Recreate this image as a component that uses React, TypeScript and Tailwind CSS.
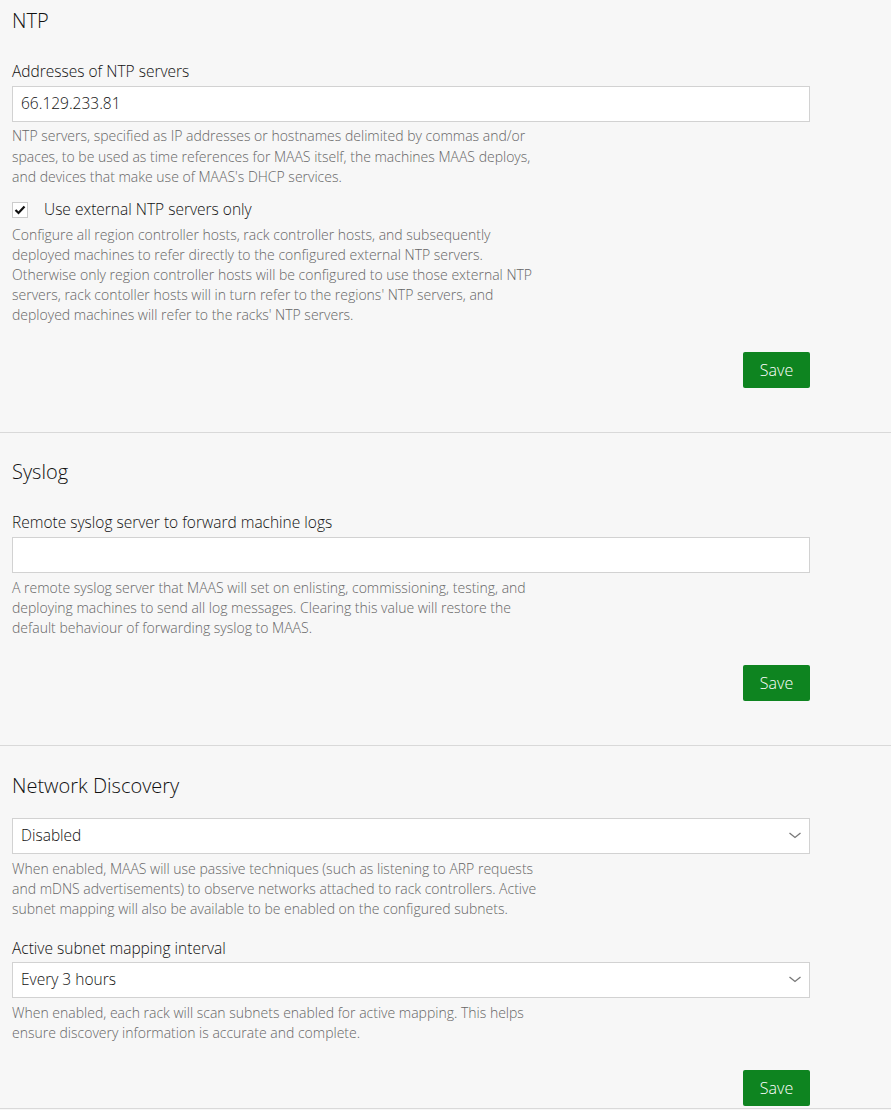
const font = { fontFamily: '"Open Sans", "Noto Sans", sans-serif' };

function SaveButton() {
  return (
    <div className="flex justify-end pr-[81px] mt-[27px]">
      <button className="h-9 w-[67px] rounded-[2px] bg-[#0e8420] text-[16px] font-light text-white">Save</button>
    </div>
  );
}

function Help({ lines, className = "" }: { lines: string[]; className?: string }) {
  return (
    <p className={`text-[14px] leading-5 text-[#666] ${className}`}>
      {lines.map((l) => (
        <span key={l} className="block">
          {l}
        </span>
      ))}
    </p>
  );
}

function Select({ value }: { value: string }) {
  return (
    <div className="mr-[81px] flex h-9 items-center justify-between border border-[#d2d2d2] bg-white pl-2 pr-2 text-[15.5px] text-[#111]">
      <span>{value}</span>
      <svg width="12" height="7" viewBox="0 0 12 7" fill="none" stroke="#777" strokeWidth="1.3">
        <path d="M0.5 1l5.5 4.5 5.5-4.5" />
      </svg>
    </div>
  );
}

export default function App() {
  return (
    <div className="min-h-screen bg-[#f7f7f7] font-light text-[#111]" style={font}>
      {/* NTP */}
      <section className="border-b border-[#d9d9d9] pl-3 pt-[7px] pb-[44px]">
        <h2 className="text-[20px] font-light leading-7">NTP</h2>
        <label className="mt-6 block text-[15.5px] leading-6">Addresses of NTP servers</label>
        <div className="mr-[81px] mt-[3px] flex h-9 items-center border border-[#d2d2d2] bg-white px-2 text-[15.5px]">
          66.129.233.81
        </div>
        <Help
          className="mt-1 leading-[20.5px]"
          lines={[
            "NTP servers, specified as IP addresses or hostnames delimited by commas and/or",
            "spaces, to be used as time references for MAAS itself, the machines MAAS deploys,",
            "and devices that make use of MAAS's DHCP services.",
          ]}
        />
        <div className="mt-[10px] flex h-6 items-center">
          <span className="flex h-4 w-4 items-center justify-center border border-[#ccc] bg-white">
            <svg width="12" height="10" viewBox="0 0 12 10" fill="none" stroke="#111" strokeWidth="2.2">
              <path d="M1.5 5l3 3 6-6.5" />
            </svg>
          </span>
          <span className="ml-4 text-[15.5px]">Use external NTP servers only</span>
        </div>
        <Help
          className="mt-[3px]"
          lines={[
            "Configure all region controller hosts, rack controller hosts, and subsequently",
            "deployed machines to refer directly to the configured external NTP servers.",
            "Otherwise only region controller hosts will be configured to use those external NTP",
            "servers, rack contoller hosts will in turn refer to the regions' NTP servers, and",
            "deployed machines will refer to the racks' NTP servers.",
          ]}
        />
        <SaveButton />
      </section>

      {/* Syslog */}
      <section className="border-b border-[#d9d9d9] pl-3 pt-[25px] pb-[44px]">
        <h2 className="text-[20px] font-light leading-7">Syslog</h2>
        <label className="mt-6 block text-[15.5px] leading-6">Remote syslog server to forward machine logs</label>
        <div className="mr-[81px] mt-[3px] h-9 border border-[#d2d2d2] bg-white" />
        <Help
          className="mt-[5px]"
          lines={[
            "A remote syslog server that MAAS will set on enlisting, commissioning, testing, and",
            "deploying machines to send all log messages. Clearing this value will restore the",
            "default behaviour of forwarding syslog to MAAS.",
          ]}
        />
        <SaveButton />
      </section>

      {/* Network Discovery */}
      <section className="border-b border-[#d9d9d9] pl-3 pt-[26px] pb-[2px]">
        <h2 className="text-[20px] font-light leading-7">Network Discovery</h2>
        <div className="mt-[18px]">
          <Select value="Disabled" />
        </div>
        <Help
          className="mt-[5px]"
          lines={[
            "When enabled, MAAS will use passive techniques (such as listening to ARP requests",
            "and mDNS advertisements) to observe networks attached to rack controllers. Active",
            "subnet mapping will also be available to be enabled on the configured subnets.",
          ]}
        />
        <label className="mt-[17px] block text-[15.5px] leading-6">Active subnet mapping interval</label>
        <div className="mt-[2px]">
          <Select value="Every 3 hours" />
        </div>
        <Help
          className="mt-[5px]"
          lines={[
            "When enabled, each rack will scan subnets enabled for active mapping. This helps",
            "ensure discovery information is accurate and complete.",
          ]}
        />
        <SaveButton />
      </section>
    </div>
  );
}
